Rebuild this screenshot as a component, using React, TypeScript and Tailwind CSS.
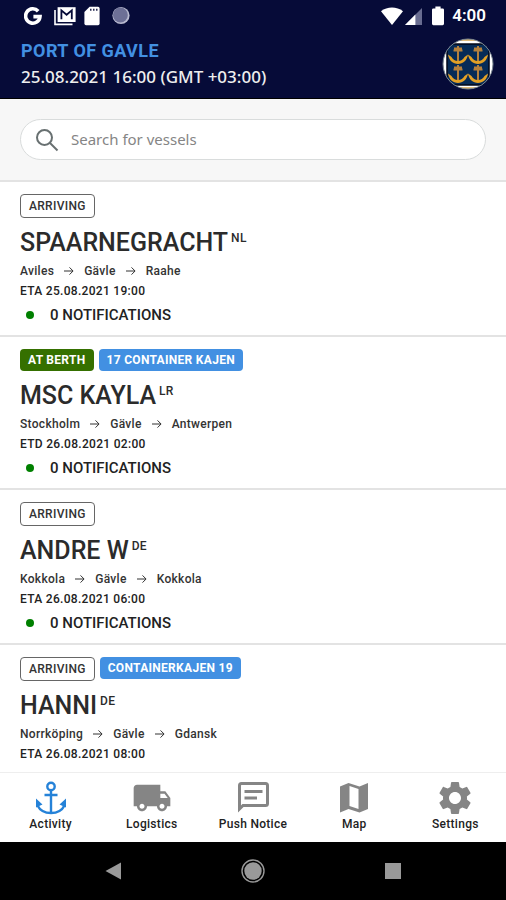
import clsx from "clsx";
import { MdLocalShipping, MdSettings } from "react-icons/md";

type Vessel = {
    name: string;
    flag: string;
    status: "ARRIVING" | "AT BERTH";
    berth?: string;
    route: string[];
    time: string;
    notifications?: number;
};

const vessels: Vessel[] = [
    {
        name: "SPAARNEGRACHT",
        flag: "NL",
        status: "ARRIVING",
        route: ["Aviles", "Gävle", "Raahe"],
        time: "ETA 25.08.2021 19:00",
        notifications: 0,
    },
    {
        name: "MSC KAYLA",
        flag: "LR",
        status: "AT BERTH",
        berth: "17 CONTAINER KAJEN",
        route: ["Stockholm", "Gävle", "Antwerpen"],
        time: "ETD 26.08.2021 02:00",
        notifications: 0,
    },
    {
        name: "ANDRE W",
        flag: "DE",
        status: "ARRIVING",
        route: ["Kokkola", "Gävle", "Kokkola"],
        time: "ETA 26.08.2021 06:00",
        notifications: 0,
    },
    {
        name: "HANNI",
        flag: "DE",
        status: "ARRIVING",
        berth: "CONTAINERKAJEN 19",
        route: ["Norrköping", "Gävle", "Gdansk"],
        time: "ETA 26.08.2021 08:00",
    },
];

function StatusBar() {
    return (
        <div className="flex h-8 items-center justify-between pl-6 pr-5 text-white">
            <div className="flex items-center gap-3">
                <svg className="h-5 w-[18px]" viewBox="0 0 18 20" fill="none" stroke="currentColor" strokeWidth="3.6">
                    <path d="M14.2 5.2A7.2 7.2 0 1 0 16 10.6H9.4" />
                </svg>
                <svg className="h-5 w-[22px]" viewBox="0 0 22 20" fill="none">
                    <path d="M1 4v14.4h17.5" stroke="currentColor" strokeWidth="1.6" />
                    <path d="M3.6 1.2h18V16h-18z" fill="currentColor" />
                    <path d="M7.4 13.2V4.4l5.2 4.4 5.2-4.4v8.8" stroke="#060b38" strokeWidth="1.8" />
                </svg>
                <svg className="-ml-1 h-5 w-4" viewBox="0 0 16 20">
                    <path d="M5.6.8H14a1.6 1.6 0 0 1 1.6 1.6v15.2a1.6 1.6 0 0 1-1.6 1.6H2a1.6 1.6 0 0 1-1.6-1.6V6z" fill="currentColor" />
                    <path d="M6.8 2.8v2M9.8 2.8v2M12.8 2.8v2" stroke="#060b38" strokeWidth="1.3" />
                </svg>
                <svg className="h-5 w-[18px]" viewBox="0 0 18 20">
                    <circle cx="9" cy="9.5" r="8.6" fill="#b9bbd0" />
                    <circle cx="8.4" cy="9" r="7.4" fill="#6d7096" />
                </svg>
            </div>
            <div className="flex items-center">
                <svg className="mr-[2px] h-5 w-[22px]" viewBox="0 0 22 20">
                    <path d="M0 5.2C6.2.4 15.8.4 22 5.2L11 19z" fill="currentColor" />
                </svg>
                <svg className="mr-[10px] h-5 w-[17px]" viewBox="0 0 17 20">
                    <path d="M17 2v17H0z" fill="#686c90" />
                    <path d="M10.4 8.6V19H0z" fill="currentColor" />
                </svg>
                <svg className="mr-2 h-5 w-3" viewBox="0 0 12 20">
                    <path d="M3.4.6h5.2v1.8h2A1.4 1.4 0 0 1 12 3.8v14a1.4 1.4 0 0 1-1.4 1.4H1.4A1.4 1.4 0 0 1 0 17.8v-14a1.4 1.4 0 0 1 1.4-1.4h2z" fill="currentColor" />
                </svg>
                <span className="text-[17px] font-semibold">4:00</span>
            </div>
        </div>
    );
}

function PortCrest() {
    return (
        <svg className="h-[52px] w-[52px]" viewBox="0 0 52 52" role="img" aria-label="Port crest">
            <defs>
                <clipPath id="crest">
                    <circle cx="26" cy="26" r="25" />
                </clipPath>
                <g id="crest-anchor" fill="none">
                    <path d="M10 1v17M6 3.5h8M5.5 5.5h9" stroke="#b5803c" strokeWidth="2" />
                    <path d="M0 9.5l3.5 2.5c1.5 2.5 3.5 4 6.5 4s5-1.5 6.5-4L20 9.5c-1 6-5 9.500-10 9.500S1 15.500 0 9.500z" fill="#e3a126" />
                </g>
            </defs>
            <g clipPath="url(#crest)">
                <path d="M0 0h52v52H0z" fill="#fff" />
                <path d="M5 6h42v41H5z" fill="#062b57" stroke="#020719" strokeWidth="1.5" />
                <path d="M14 1.8h24M14 50.2h24" stroke="#d9a650" strokeWidth="2" />
                <use href="#crest-anchor" x="6" y="7" />
                <use href="#crest-anchor" x="26" y="7" />
                <use href="#crest-anchor" x="6" y="26" />
                <use href="#crest-anchor" x="26" y="26" />
            </g>
            <circle cx="26" cy="26" r="25" fill="none" stroke="#77848f" strokeWidth="1" />
        </svg>
    );
}

function RouteArrow() {
    return (
        <svg className="h-3 w-[10px]" viewBox="0 0 10 12" fill="none" stroke="#333" strokeWidth="1">
            <path d="M0 6h9M5.5 2.4L9.1 6 5.5 9.6" />
        </svg>
    );
}

function VesselCard({ vessel }: { vessel: Vessel }) {
    const docked = vessel.status === "AT BERTH";
    return (
        <li className="border-b-2 border-[#e3e3e3] px-5 pb-[6px] pt-3 last:border-b-0">
            <div className="flex items-start gap-[5px] text-xs leading-[22px] tracking-wide">
                <span
                    className={clsx(
                        "rounded-[4px] px-2",
                        docked ? "bg-[#357000] font-bold text-white" : "border border-[#666] font-medium text-[#333]"
                    )}
                >
                    {vessel.status}
                </span>
                {vessel.berth && (
                    <span className="rounded-[4px] bg-[#4290e2] px-2 font-bold text-white">{vessel.berth}</span>
                )}
            </div>
            <h2 className="mt-[9px] flex text-[25px] font-medium leading-8 text-[#2b2b2b]">
                {vessel.name}
                <span className="ml-[3px] text-xs leading-[22px] tracking-wide">{vessel.flag}</span>
            </h2>
            <div className="mt-[2px] flex items-center gap-[10px] text-xs font-medium leading-5 tracking-wide text-[#333]">
                {vessel.route.map((stop, i) => (
                    <span key={i} className="flex items-center gap-[10px]">
                        {i > 0 && <RouteArrow />}
                        {stop}
                    </span>
                ))}
            </div>
            <p className="text-xs font-medium leading-5 tracking-wide text-[#222]">{vessel.time}</p>
            {vessel.notifications !== undefined && (
                <p className="flex items-center gap-4 pl-[6px] text-[15px] font-medium leading-7 text-[#222]">
                    <span className="h-2 w-2 rounded-full bg-[#008000]" />
                    {vessel.notifications} NOTIFICATIONS
                </p>
            )}
        </li>
    );
}

const tabs = [
    {
        label: "Activity",
        active: true,
        icon: (
            <svg className="h-9 w-9" viewBox="0 0 36 36" fill="none" stroke="currentColor" strokeWidth="2.4">
                <circle cx="18" cy="6.5" r="3.7" />
                <path d="M18 10v23M11.5 15h13" />
                <path d="M4.5 25.5c2.5 5 7.5 7.5 13.5 7.5s11-2.5 13.5-7.5" />
                <path d="M3 27.5v-9l6.5 6zM33 27.5v-9l-6.5 6z" fill="currentColor" stroke="none" />
            </svg>
        ),
    },
    { label: "Logistics", icon: <MdLocalShipping className="h-10 w-10" /> },
    {
        label: "Push Notice",
        icon: (
            <svg className="h-9 w-9" viewBox="0 0 36 36" fill="none" stroke="currentColor" strokeWidth="3">
                <path d="M4.5 29V5.5a2 2 0 0 1 2-2h24a2 2 0 0 1 2 2v18a2 2 0 0 1-2 2H8z" />
                <path d="M9.5 11.5h18M9.5 18h12.5" />
            </svg>
        ),
    },
    {
        label: "Map",
        icon: (
            <svg className="h-9 w-9" viewBox="0 0 36 36">
                <path d="M4 6.5L12.5 3l11 3.5L32 3v26l-8.5 3.5-11-3.5L4 32.5z" fill="currentColor" />
                <path d="M13.5 6l9 3v20l-9-3z" fill="#fff" />
            </svg>
        ),
    },
    { label: "Settings", icon: <MdSettings className="h-10 w-10" /> },
];

function TabBar() {
    return (
        <nav className="grid h-[70px] shrink-0 grid-cols-5 border-t border-[#eee] bg-white">
            {tabs.map((tab) => (
                <button key={tab.label} className="flex flex-col items-center pt-[7px] text-xs font-medium text-[#222]">
                    <span
                        className={clsx(
                            "flex h-9 items-center justify-center",
                            tab.active ? "text-[#2582d8]" : "text-[#858585]"
                        )}
                    >
                        {tab.icon}
                    </span>
                    <span className="leading-4 tracking-wide">{tab.label}</span>
                </button>
            ))}
        </nav>
    );
}

function SystemBar() {
    return (
        <div className="flex h-[58px] shrink-0 items-center justify-around bg-black px-[43px] text-[#999]">
            <button aria-label="Back">
                <svg className="h-6 w-6" viewBox="0 0 24 24" fill="currentColor">
                    <path d="M4.5 12L20 3.5v17z" />
                </svg>
            </button>
            <button aria-label="Home">
                <svg className="h-6 w-6" viewBox="0 0 24 24">
                    <circle cx="12" cy="12" r="11" fill="none" stroke="currentColor" strokeWidth="1.4" />
                    <circle cx="12" cy="12" r="8.7" fill="currentColor" />
                </svg>
            </button>
            <button aria-label="Recent apps">
                <svg className="h-6 w-6" viewBox="0 0 24 24" fill="currentColor">
                    <path d="M4 4h16v16H4z" />
                </svg>
            </button>
        </div>
    );
}

export default function App() {
    return (
        <div className="flex h-screen flex-col bg-white font-[Roboto,sans-serif]">
            <header className="h-[99px] shrink-0 border-b border-black bg-[#060b38]">
                <StatusBar />
                <div className="flex items-start justify-between pl-[21px] pr-3 pt-[6px]">
                    <div>
                        <h1 className="text-lg font-bold leading-[26px] tracking-wide text-[#4290e2]">PORT OF GAVLE</h1>
                        <p className="font-['Noto_Sans',sans-serif] text-[17px] font-medium leading-[26px] text-[#eee]">
                            25.08.2021 16:00 (GMT +03:00)
                        </p>
                    </div>
                    <PortCrest />
                </div>
            </header>

            <div className="shrink-0 border-b-2 border-[#e3e3e3] bg-[#f7f7f7] px-5 py-5">
                <label className="flex h-[41px] items-center gap-3 rounded-full border border-[#d9dcdc] bg-white px-[14px]">
                    <svg className="h-6 w-6 shrink-0" viewBox="0 0 24 24" fill="none" stroke="#687071" strokeWidth="2">
                        <circle cx="9.5" cy="9.5" r="7.5" />
                        <path d="M15 15l7.5 7.5" />
                    </svg>
                    <input
                        type="text"
                        aria-label="Search for vessels"
                        placeholder="Search for vessels"
                        className="min-w-0 flex-1 bg-transparent font-['Noto_Sans',sans-serif] text-[15px] outline-none placeholder:text-[#858585]"
                    />
                </label>
            </div>

            <ul className="min-h-0 flex-1 overflow-y-auto [scrollbar-width:none]">
                {vessels.map((vessel) => (
                    <VesselCard key={vessel.name} vessel={vessel} />
                ))}
            </ul>

            <TabBar />
            <SystemBar />
        </div>
    );
}
